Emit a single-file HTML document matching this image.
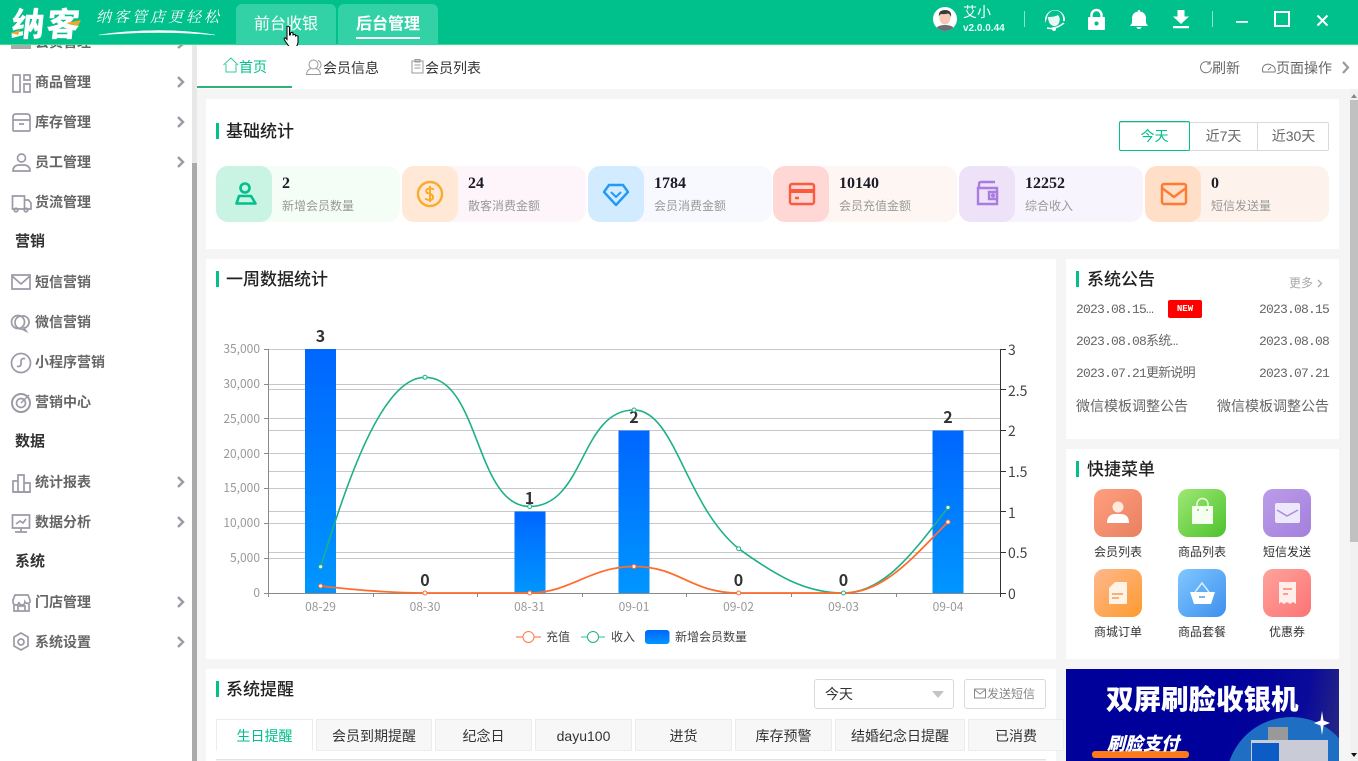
<!DOCTYPE html>
<html lang="zh"><head><meta charset="utf-8"><title>纳客</title>
<style>
*{box-sizing:border-box;margin:0;padding:0}
html,body{width:1358px;height:761px;overflow:hidden;background:#f5f5f5}
body{position:relative;font-family:"Liberation Sans","Noto Sans CJK SC",sans-serif;color:#333}
.a,.a *{position:absolute}
.a{position:absolute;white-space:nowrap}
.side{font-size:14px;font-weight:700;color:#666;left:35px;line-height:20px;height:20px}
.sh{font-size:15px;font-weight:700;color:#333;left:15px;line-height:20px}
.ttl{font-size:17px;font-weight:500;color:#222;line-height:22px}
.bar{width:3px;height:16px;background:#00c08b}
.stat{height:56px;width:184px;top:166px;border-radius:12px}
.ico{left:0;top:0;width:56px;height:56px;border-radius:12px}
.num{left:66px;top:8px;font:700 16px/20px "Liberation Serif",serif;color:#1c1c28}
.lab{left:66px;top:31px;font-size:12px;line-height:18px;color:#999}
.date{font:13px/18px "Liberation Mono","Noto Sans CJK SC",monospace;color:#666;letter-spacing:-.8px}
.q{width:48px;height:48px;border-radius:10px;overflow:hidden}
.ql{font-size:12px;line-height:16px;color:#333;width:70px;text-align:center}
.tab{top:719px;height:32px;background:#f7f7f7;border:1px solid #ececec;font-size:14px;line-height:32px;text-align:center;color:#333}
svg{display:block}
</style></head><body>

<!-- sidebar -->
<div class="a" style="left:0;top:45px;width:197px;height:716px;background:#fff;overflow:hidden">
<div style="left:192px;top:0;width:5px;height:716px;background:#e8e8e8"></div>
<div style="left:192px;top:118px;width:5px;height:598px;background:#aaa"></div>
</div>
<div class="a" style="left:11px;top:45px;width:20px;height:4px;background:#aaa"></div>
<div class="a side" style="top:32px">会员管理</div>
<svg class="a" style="left:0;top:0" width="197" height="761" fill="none" stroke="#9b9ba6" stroke-width="1.7">
<path d="M178 40l5 4-5 4M178 77l5 5-5 5M178 117l5 5-5 5M178 157l5 5-5 5M178 477l5 5-5 5M178 517l5 5-5 5M178 597l5 5-5 5M178 637l5 5-5 5" stroke-width="2.4"/>
<path d="M13 75h7v17h-7zM24 75h6v5h-6zM24 84h6v8h-6z"/>
<path d="M13 120v-3q0-3 3-3h11q3 0 3 3v3zM13 120v10q0 1 1 1h15q1 0 1-1v-10M19 124h5"/>
<circle cx="21.500" cy="158" r="4"/><path d="M13 171q0-5 5-6h7q5 1 5 6z"/>
<path d="M12.500 196h12v13h-12zM24.500 200h4l2.500 3v6h-6.500"/><circle cx="16" cy="210" r="1.800"/><circle cx="26" cy="210" r="1.800"/>
<path d="M12 275h18v14H12zM12 276l9 8 9-8"/>
<circle cx="18" cy="322" r="6.500"/><path d="M22 316a6 6 0 1 1 2 12l2 3-4-2a6 6 0 0 1-1-13"/>
<circle cx="21" cy="363" r="9.500"/><path d="M17 366a2.500 2.500 0 0 0 4-2v-3a2.500 2.500 0 0 1 4-2"/>
<circle cx="21" cy="403" r="9" stroke-width="2"/><circle cx="21" cy="403" r="4.500"/><path d="M21 403l8-8" stroke-width="1.500"/>
<path d="M13 492v-11h5v11zM18 492v-17h6v17zM24 492v-9h6v9z"/><path d="M13 492h17"/>
<path d="M12.500 515h17v13h-17zM21 528v4M15 532h12M16 524l4-3 3 2 3-4"/>
<path d="M13 600l2-5h13l2 5v2a3 3 0 0 1-5 0 3 3 0 0 1-6 0 3 3 0 0 1-6 0zM14 604v7h15v-7M18 611v-5h7v5"/>
<path d="M21 633l7 4v9l-7 4-7-4v-9z"/><circle cx="21" cy="642" r="3"/>
</svg>
<div class="a side" style="top:72px">商品管理</div>
<div class="a side" style="top:112px">库存管理</div>
<div class="a side" style="top:152px">员工管理</div>
<div class="a side" style="top:192px">货流管理</div>
<div class="a sh" style="top:232px">营销</div>
<div class="a side" style="top:272px">短信营销</div>
<div class="a side" style="top:312px">微信营销</div>
<div class="a side" style="top:352px">小程序营销</div>
<div class="a side" style="top:392px">营销中心</div>
<div class="a sh" style="top:432px">数据</div>
<div class="a side" style="top:472px">统计报表</div>
<div class="a side" style="top:512px">数据分析</div>
<div class="a sh" style="top:552px">系统</div>
<div class="a side" style="top:592px">门店管理</div>
<div class="a side" style="top:632px">系统设置</div>

<!-- header -->
<div class="a" style="left:0;top:0;width:1358px;height:45px;background:#00c08b;border-bottom:1px solid #3ddf8e"></div>
<div class="a" style="left:12px;top:2px;font:900 33px/40px 'Noto Sans CJK SC',sans-serif;color:#fff;letter-spacing:2px;transform:skewX(-6deg)">纳客</div>
<svg class="a" style="left:0;top:0" width="240" height="45" fill="none">
<path d="M11 33l9-3-2 5zM66 23l15-3-3 6z" fill="#f5a623"/>
<path d="M99 35Q160 26 215 35Q160 30 99 35z" fill="#fff" stroke="#fff" stroke-width=".6"/>
</svg>
<div class="a" style="left:96px;top:6px;font:italic 15px/22px 'Noto Serif CJK SC',serif;color:#fff;letter-spacing:3px">纳客管店更轻松</div>
<div class="a" style="left:236px;top:4px;width:100px;height:41px;background:#33d2a6;border-radius:6px 6px 0 0;color:#fff;font-size:16px;line-height:42px;text-align:center">前台收银</div>
<div class="a" style="left:338px;top:4px;width:100px;height:41px;background:#33d2a6;border-radius:6px 6px 0 0;color:#fff;font-size:16px;font-weight:700;line-height:42px;text-align:center">后台管理</div>
<div class="a" style="left:356px;top:37px;width:64px;height:2px;background:#fff"></div>
<svg class="a" style="left:282px;top:25px" width="20" height="24" fill="#fff" stroke="#000" stroke-width="1">
<path d="M5 1.500q2-1 2.500 1V10l1-.2V8q1.500-1 2.500 0v2q1.500-1 2.500 0v1q1.500-.8 2.500.3V17q0 2-1.500 4.500H7L2.500 15q-1-2 .8-2.200L5 14.500z"/></svg>

<svg class="a" style="left:933px;top:7px" width="24" height="24"><defs><clipPath id="av"><circle cx="12" cy="12" r="12"/></clipPath></defs><circle cx="12" cy="12" r="12" fill="#fff"/><g clip-path="url(#av)"><path d="M2 24q1-6 10-6t10 6z" fill="#6b6f78"/><ellipse cx="12" cy="11" rx="5.500" ry="6.500" fill="#f5c9b4"/><path d="M6 10Q5 3 12 3t6 7q-1-3-3-3.500-3 1-7 .5-2 1-2 3z" fill="#3a3a3a"/></g></svg>
<div class="a" style="left:963px;top:3px;font-size:14px;line-height:18px;color:#fff">艾小</div>
<div class="a" style="left:963px;top:22px;font-size:10px;font-weight:700;line-height:14px;color:#e6fff6">v2.0.0.44</div>
<div class="a" style="left:1024px;top:11px;width:1px;height:16px;background:#8fe3c8"></div>
<div class="a" style="left:1212px;top:11px;width:1px;height:16px;background:#8fe3c8"></div>
<svg class="a" style="left:1040px;top:6px" width="300" height="26" fill="#fff">
<path d="M15 4a10 10 0 0 1 10 9v2h-2v-2a8 8 0 0 0-16-1l-2 5a10 10 0 0 1 0-3 10 10 0 0 1 10-10z"/>
<path d="M8 11q7 0 10-2 3 3 1 8-2 4-6 3-5-2-5-9z" opacity=".9"/><path d="M7 22q8 2 17-5" stroke="#fff" stroke-width="1.500" fill="none"/><circle cx="14" cy="23" r="2"/>
<path d="M51.500 12V9a5 5 0 0 1 10 0v3" fill="none" stroke="#fff" stroke-width="2.400"/>
<path d="M49 11h15a1 1 0 0 1 1 1v11a1 1 0 0 1-1 1H49a1 1 0 0 1-1-1V12a1 1 0 0 1 1-1z"/><circle cx="56.500" cy="17.500" r="2" fill="#00c08b"/>
<path d="M99 4q1.200 0 1.200 1.500 5.800 1 5.800 7.500v4l2 3h-18l2-3v-4q0-6.500 5.800-7.500Q97.800 4 99 4zM96.500 21h5a2.500 2 0 0 1-5 0z"/>
<path d="M137.500 4h7v6.500h4.500L141 18 133 10.500h4.500zM133 20h16v2.200h-16z"/>
<path d="M196 15h12v1.800h-12z"/>
<path d="M235 6h14v14h-14z" fill="none" stroke="#fff" stroke-width="2"/>
<path d="M277.500 9.500l10 10M287.500 9.500l-10 10" fill="none" stroke="#fff" stroke-width="2"/>
</svg>

<!-- tab bar -->
<div class="a" style="left:197px;top:46px;width:1161px;height:43px;background:#fff"></div>
<div class="a" style="left:197px;top:86px;width:95px;height:2px;background:#2fb27a"></div>
<svg class="a" style="left:222px;top:56px" width="300" height="20" fill="none" stroke="#3ccba0" stroke-width="1">
<path d="M1.500 9L9 2l7 7M4 8v8h10V8"/>
<g stroke="#999"><circle cx="91.500" cy="8.500" r="4.500"/><path d="M89 12.500q-4 1-4.500 6h14q-.5-5-4.500-6M96 4.500a4.500 4.500 0 0 1 1 8"/></g>
<path stroke="#999" d="M190 5h11v12h-11zM193 3.500h5V6h-5zM192.500 9h6M192.500 12h6"/>
</svg>
<div class="a" style="left:239px;top:57px;font-size:14px;line-height:20px;color:#00c08b">首页</div>
<div class="a" style="left:323px;top:58px;font-size:14px;line-height:20px;color:#333">会员信息</div>
<div class="a" style="left:425px;top:58px;font-size:14px;line-height:20px;color:#333">会员列表</div>
<svg class="a" style="left:1198px;top:60px" width="160" height="16" fill="none" stroke="#777" stroke-width="1">
<path d="M12 3.500a5.500 5.500 0 1 0 1.500 4M12 1v3h-3"/>
<path d="M65 12a5.500 5.500 0 0 1 8-7 5.500 5.500 0 0 1 4 7zM70 10l3-3"/>
<path d="M145 2l5 5.500-5 5.500" stroke="#999" stroke-width="2.200"/>
</svg>
<div class="a" style="left:1212px;top:58px;font-size:14px;line-height:20px;color:#666">刷新</div>
<div class="a" style="left:1276px;top:58px;font-size:14px;line-height:20px;color:#666">页面操作</div>

<!-- main scrollbar -->
<div class="a" style="left:1350px;top:89px;width:8px;height:672px;background:#f1f1f1"></div>
<div class="a" style="left:1350px;top:100px;width:8px;height:442px;background:#c1c1c1"></div>
<svg class="a" style="left:1350px;top:89px" width="8" height="672"><path d="M1 9l3-4 3 4z" fill="#888"/><path d="M1 664l3 4 3-4z" fill="#111"/></svg>

<!-- panels -->
<div class="a" style="left:206px;top:99px;width:1133px;height:150px;background:#fff"></div>
<div class="a" style="left:206px;top:259px;width:850px;height:400px;background:#fff"></div>
<div class="a" style="left:1066px;top:259px;width:273px;height:180px;background:#fff"></div>
<div class="a" style="left:1066px;top:449px;width:273px;height:210px;background:#fff"></div>
<div class="a" style="left:206px;top:669px;width:850px;height:92px;background:#fff"></div>

<div class="a bar" style="left:216px;top:123px"></div><div class="a ttl" style="left:226px;top:121px">基础统计</div>
<div class="a bar" style="left:216px;top:271px"></div><div class="a ttl" style="left:226px;top:269px">一周数据统计</div>
<div class="a bar" style="left:1076px;top:271px"></div><div class="a ttl" style="left:1087px;top:269px">系统公告</div>
<div class="a bar" style="left:1076px;top:461px"></div><div class="a ttl" style="left:1087px;top:459px">快捷菜单</div>
<div class="a bar" style="left:216px;top:681px"></div><div class="a ttl" style="left:226px;top:679px">系统提醒</div>

<!-- period -->
<div class="a" style="left:1119px;top:122px;width:210px;height:29px;border:1px solid #d9d9d9;border-radius:2px"></div>
<div class="a" style="left:1119px;top:121px;width:71px;height:30px;border:1px solid #00c08b;border-radius:2px;font-size:14px;line-height:29px;text-align:center;color:#00c08b">今天</div>
<div class="a" style="left:1190px;top:122px;width:68px;height:29px;border-right:1px solid #d9d9d9;font-size:14px;line-height:29px;text-align:center;color:#666">近7天</div>
<div class="a" style="left:1258px;top:122px;width:71px;height:29px;font-size:14px;line-height:29px;text-align:center;color:#666">近30天</div>

<!-- stats -->
<div class="a stat" style="left:216px;background:#f4fdf6"><div class="ico" style="background:#c9f4e3"></div>
<svg style="left:16px;top:14px" width="26" height="28" fill="none" stroke="#00c08b" stroke-width="2.600"><circle cx="13" cy="8" r="4.500"/><path d="M7 16h12l4.500 7.500h-19z" stroke-linejoin="round"/></svg>
<div class="num">2</div><div class="lab">新增会员数量</div></div>

<div class="a stat" style="left:402px;background:#fdf5f9"><div class="ico" style="background:#ffe9d6"></div>
<svg style="left:14px;top:14px" width="28" height="28" fill="none" stroke="#fbab2b" stroke-width="2.400"><circle cx="14" cy="14" r="12"/><path d="M18 9.500q-4-2-6.500-.5t-.5 4q6 1 6 4t-3 3q-3 0-5-1.500M14 6v16" stroke-width="2"/></svg>
<div class="num">24</div><div class="lab">散客消费金额</div></div>

<div class="a stat" style="left:588px;background:#f7f9fe"><div class="ico" style="background:#d3ebff"></div>
<svg style="left:14px;top:16px" width="28" height="26" fill="none" stroke="#1e9bfa" stroke-width="2.400" stroke-linejoin="round"><path d="M7 3h14l5 7-12 13L2 10z"/><path d="M9 10l5 5 5-5" stroke-width="2"/></svg>
<div class="num">1784</div><div class="lab">会员消费金额</div></div>

<div class="a stat" style="left:773px;background:#fef6f3"><div class="ico" style="background:#ffd8d6"></div>
<svg style="left:15px;top:16px" width="28" height="24" fill="none" stroke="#fb5a3c" stroke-width="2.400"><rect x="2" y="2" width="24" height="20" rx="2"/><path d="M2 9h24" stroke-width="4"/><path d="M7 16h4" stroke-width="2.500"/></svg>
<div class="num">10140</div><div class="lab">会员充值金额</div></div>

<div class="a stat" style="left:959px;background:#f8f4fd"><div class="ico" style="background:#eee2f9"></div>
<svg style="left:16px;top:14px" width="26" height="28" fill="none" stroke="#a87ddf" stroke-width="2.400"><path d="M4 8V4q0-2 2-2h14M3 8h19v16H3z"/><path d="M14 12h8v7h-8z"/><circle cx="18" cy="15.500" r="1" fill="#a87ddf"/></svg>
<div class="num">12252</div><div class="lab">综合收入</div></div>

<div class="a stat" style="left:1145px;background:#fef3ec"><div class="ico" style="background:#ffdfc8"></div>
<svg style="left:15px;top:16px" width="28" height="24" fill="none" stroke="#fd7b33" stroke-width="2.400" stroke-linejoin="round"><rect x="2" y="2" width="24" height="20" rx="2"/><path d="M2 6l12 9 12-9"/></svg>
<div class="num">0</div><div class="lab">短信发送量</div></div>

<!-- chart -->
<svg class="a" style="left:206px;top:259px" width="850" height="400" viewBox="206 259 850 400" font-family="Noto Sans CJK SC,Liberation Sans,sans-serif">
<defs><linearGradient id="bg" x1="0" y1="0" x2="0" y2="1"><stop offset="0" stop-color="#0066ff"/><stop offset="1" stop-color="#0096ff"/></linearGradient></defs>
<g stroke="#c8c8c8" stroke-width="1"><path d="M269 349.500H1001M269 384.500H1001M269 389.500H1001M269 418.500H1001M269 430.500H1001M269 453.500H1001M269 471.500H1001M269 488.500H1001M269 511.500H1001M269 523.500H1001M269 552.500H1001M269 558.500H1001"/></g>
<rect x="305" y="349" width="31" height="244" fill="url(#bg)"/>
<rect x="514.500" y="511.500" width="31" height="81.500" fill="url(#bg)"/>
<rect x="618.500" y="430.500" width="31" height="162.500" fill="url(#bg)"/>
<rect x="932.500" y="430.500" width="31" height="162.500" fill="url(#bg)"/>
<path d="M269 593.500H1001" stroke="#8a8a8a"/>
<path d="M268.500 349V597M264 349.500h5M264 384.500h5M264 418.500h5M264 453.500h5M264 488.500h5M264 523.500h5M264 558.500h5M264 593.500h5M373.500 593v4M477.500 593v4M582.500 593v4M686.500 593v4M791.500 593v4M896.500 593v4" stroke="#8a8a8a" fill="none"/>
<path d="M1000.500 349V597M1001 349.500h5M1001 389.500h5M1001 430.500h5M1001 471.500h5M1001 511.500h5M1001 552.500h5M1001 593.500h5" stroke="#333" fill="none"/>
<g font-size="12" fill="#999" text-anchor="end"><text x="260" y="353">35,000</text><text x="260" y="388">30,000</text><text x="260" y="423">25,000</text><text x="260" y="458">20,000</text><text x="260" y="492">15,000</text><text x="260" y="527">10,000</text><text x="260" y="562">5,000</text><text x="260" y="597">0</text></g>
<g font-size="14" fill="#444"><text x="1008" y="355">3</text><text x="1008" y="396">2.5</text><text x="1008" y="436">2</text><text x="1008" y="477">1.5</text><text x="1008" y="518">1</text><text x="1008" y="558">0.5</text><text x="1008" y="599">0</text></g>
<g font-size="12" fill="#999" text-anchor="middle"><text x="320.500" y="611">08-29</text><text x="425" y="611">08-30</text><text x="529.500" y="611">08-31</text><text x="634" y="611">09-01</text><text x="738.500" y="611">09-02</text><text x="843.500" y="611">09-03</text><text x="948" y="611">09-04</text></g>
<g font-size="16" font-weight="700" fill="#333" text-anchor="middle"><text x="320.500" y="342">3</text><text x="425" y="586">0</text><text x="529.500" y="504">1</text><text x="634" y="423">2</text><text x="738.500" y="586">0</text><text x="843.500" y="586">0</text><text x="948" y="423">2</text></g>
<path fill="none" stroke="#1db088" stroke-width="1.600" d="M320.600 566.700C345 490 380 377.300 425 377.300C480 377.300 475 506.500 529.700 506.500C585 506.500 580 410 634 410C675 410 685 505 738.700 548.700C775 575 805 593 843.500 593C885 593 915 550 948 507.500"/>
<path fill="none" stroke="#ff6d2e" stroke-width="1.800" d="M320.600 586C355 590 390 593 425 593L529.700 593C570 593 590 566.500 634 566.500C680 566.500 690 593 738.700 593L843.500 593C885 593 915 555 948 522"/>
<g fill="#fff" stroke="#1db088" stroke-width="1"><circle cx="320.600" cy="566.700" r="2"/><circle cx="425" cy="377.300" r="2"/><circle cx="529.700" cy="506.500" r="2"/><circle cx="634" cy="410" r="2"/><circle cx="738.700" cy="548.700" r="2"/><circle cx="843.500" cy="593" r="2"/><circle cx="948" cy="507.500" r="2"/></g>
<g fill="#fff" stroke="#ff6d2e" stroke-width="1"><circle cx="320.600" cy="586" r="2"/><circle cx="425" cy="593" r="2"/><circle cx="529.700" cy="593" r="2"/><circle cx="634" cy="566.500" r="2"/><circle cx="738.700" cy="593" r="2"/><circle cx="948" cy="522" r="2"/></g>
<path d="M516 637h25" stroke="#ff9a73" stroke-width="1.500"/><circle cx="528.500" cy="637" r="5.500" fill="#fff" stroke="#ff7b45"/>
<path d="M581 637h24" stroke="#6fd9ba" stroke-width="1.500"/><circle cx="593" cy="637" r="5.500" fill="#fff" stroke="#1db088"/>
<rect x="645" y="630" width="24.500" height="14" rx="3" fill="url(#bg)"/>
<g font-size="12" fill="#444"><text x="546" y="641">充值</text><text x="611" y="641">收入</text><text x="675" y="641">新增会员数量</text></g>
</svg>

<!-- notices -->
<div class="a" style="left:1289px;top:274px;font-size:12px;line-height:18px;color:#aaa">更多</div>
<svg class="a" style="left:1316px;top:279px" width="8" height="9" fill="none" stroke="#aaa" stroke-width="1.300"><path d="M2 1l3.500 3.500L2 8"/></svg>
<div class="a date" style="left:1076px;top:301px">2023.08.15…</div>
<div class="a" style="left:1168px;top:300px;width:34px;height:18px;background:#f00;border-radius:2px;color:#fff;font:700 9px/18px 'Liberation Mono',monospace;text-align:center">NEW</div>
<div class="a date" style="left:1259px;top:301px">2023.08.15</div>
<div class="a date" style="left:1076px;top:333px">2023.08.08系统…</div>
<div class="a date" style="left:1259px;top:333px">2023.08.08</div>
<div class="a date" style="left:1076px;top:365px">2023.07.21更新说明</div>
<div class="a date" style="left:1259px;top:365px">2023.07.21</div>
<div class="a" style="left:1076px;top:397px;font-size:14px;line-height:18px;color:#666">微信模板调整公告</div>
<div class="a" style="left:1217px;top:397px;font-size:14px;line-height:18px;color:#666">微信模板调整公告</div>

<!-- quick -->
<div class="a q" style="left:1094px;top:489px;background:linear-gradient(135deg,#ff9f80,#e8805f)"><svg width="48" height="48"><circle cx="24" cy="18" r="5.500" fill="#ffe8dc"/><path d="M13 34q0-8 7-9h8q7 1 7 9z" fill="#fff"/></svg></div>
<div class="a q" style="left:1178px;top:489px;background:linear-gradient(135deg,#9fe874,#4dc22d)"><svg width="48" height="48"><path d="M14 17h21v18H14z" fill="#f4fff0"/><path d="M19 17v-2a5 5 0 0 1 11 0v2" fill="none" stroke="#eafbe0" stroke-width="1.500"/><circle cx="20" cy="21" r="1" fill="#7cd350"/><circle cx="29" cy="21" r="1" fill="#7cd350"/></svg></div>
<div class="a q" style="left:1263px;top:489px;background:linear-gradient(135deg,#bb9de9,#a47fdc)"><svg width="48" height="48"><rect x="12" y="14" width="25" height="20" rx="2" fill="#eee8fb"/><path d="M14 21l10 6 11-6" fill="none" stroke="#a98ae0" stroke-width="1.500"/></svg></div>
<div class="a ql" style="left:1083px;top:544px">会员列表</div><div class="a ql" style="left:1167px;top:544px">商品列表</div><div class="a ql" style="left:1252px;top:544px">短信发送</div>
<div class="a q" style="left:1094px;top:569px;background:linear-gradient(135deg,#fdb88e,#ff9a2e)"><svg width="48" height="48"><path d="M21 13h11q1 0 1 1v20q0 1-1 1H16q-1 0-1-1V19z" fill="#fff3e6"/><path d="M18 25h11M18 29h7" stroke="#f49a5c" stroke-width="1.500"/></svg></div>
<div class="a q" style="left:1178px;top:569px;background:linear-gradient(135deg,#80c8ff,#3d8fef)"><svg width="48" height="48"><path d="M12 23h25l-4 12H16z" fill="#fff"/><path d="M17 23l7-9 7 9" fill="none" stroke="#d8eeff" stroke-width="1.500"/><path d="M21 28h6" stroke="#48a0f0" stroke-width="1.500"/></svg></div>
<div class="a q" style="left:1263px;top:569px;background:linear-gradient(135deg,#ffa39c,#fb7474)"><svg width="48" height="48"><path d="M16 13h17v22l-3-2-3 2-3-2-3 2-3-2-2 2z" fill="#ffeee9"/><path d="M20 20h9M20 25h5" stroke="#fb8075" stroke-width="1.500"/></svg></div>
<div class="a ql" style="left:1083px;top:624px">商城订单</div><div class="a ql" style="left:1167px;top:624px">商品套餐</div><div class="a ql" style="left:1252px;top:624px">优惠券</div>

<!-- banner -->
<div class="a" style="left:1066px;top:669px;width:273px;height:92px;background:linear-gradient(100deg,#00009b 60%,#0a0a9a 85%,#2a2a80);overflow:hidden">
<svg style="left:0;top:0" width="273" height="92">
<path d="M163.500 92A65 65 0 0 1 273 69.200V92z" fill="#1e6ec4"/>
<rect x="202" y="58" width="20" height="13" fill="#999"/>
<rect x="185" y="71" width="77" height="21" fill="#c9ccd6"/>
<rect x="186" y="74" width="27" height="18" fill="#0d5bc4"/>
<path d="M256 42l1.500 9.500L264 54l-6.500 2.500L256 66l-1.500-9.500L248 54l6.500-2.500z" fill="#fff"/>
</svg>
<div style="left:40px;top:10px;color:#fff;font:900 27.500px/36px 'Noto Sans CJK SC',sans-serif">双屏刷脸收银机</div>
<div style="left:26px;top:82px;width:97px;height:7px;border-radius:3px;background:#ff7a1a"></div>
<div style="left:41px;top:62px;color:#fff;font:italic 900 18px/24px 'Noto Sans CJK SC',sans-serif">刷脸支付</div>
</div>

<!-- reminder -->
<div class="a" style="left:814px;top:679px;width:140px;height:30px;border:1px solid #d9d9d9;border-radius:3px;background:#fff;font-size:14px;line-height:28px;padding-left:10px;color:#333">今天</div>
<svg class="a" style="left:931px;top:690px" width="14" height="9"><path d="M1 1h12l-6 7z" fill="#c4c4c4"/></svg>
<div class="a" style="left:964px;top:679px;width:82px;height:30px;border:1px solid #d9d9d9;border-radius:3px;background:#fff;font-size:12px;line-height:28px;padding-left:22px;color:#888">发送短信</div>
<svg class="a" style="left:974px;top:688px" width="12" height="11" fill="none" stroke="#888"><rect x=".5" y="1" width="11" height="9"/><path d="M1 2l5 4 5-4"/></svg>
<div class="a tab" style="left:216px;width:97px;background:#fff;color:#00c08b;border-bottom-color:#fff">生日提醒</div>
<div class="a tab" style="left:316px;width:116px">会员到期提醒</div>
<div class="a tab" style="left:435px;width:97px">纪念日</div>
<div class="a tab" style="left:535px;width:97px">dayu100</div>
<div class="a tab" style="left:635px;width:97px">进货</div>
<div class="a tab" style="left:735px;width:97px">库存预警</div>
<div class="a tab" style="left:835px;width:130px">结婚纪念日提醒</div>
<div class="a tab" style="left:968px;width:96px">已消费</div>
<div class="a" style="left:216px;top:759px;width:830px;height:2px;background:#f2f2f2;border-top:1px solid #e2e2e2"></div>
</body></html>
